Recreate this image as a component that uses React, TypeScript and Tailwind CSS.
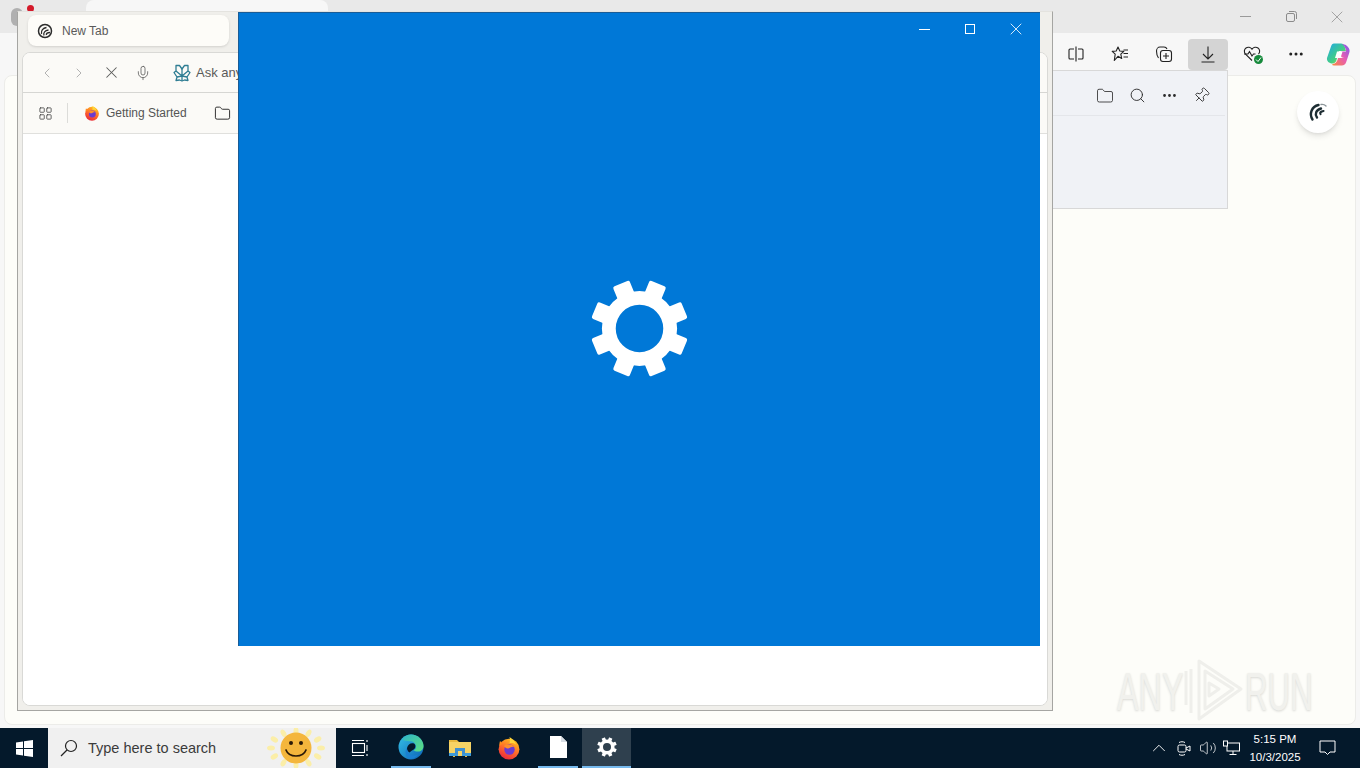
import React from "react";
import { ChevronLeft, ChevronRight, X, Mic, LayoutGrid, Folder, Search, MoreHorizontal, Pin, ChevronUp, Volume2 } from "lucide-react";

const Gear = ({ size, color, hole }: { size: number; color: string; hole: number }) => {
  const angles = [22.5, 67.5, 112.5, 157.5, 202.5, 247.5, 292.5, 337.5];
  return (
    <svg width={size} height={size} viewBox="0 0 100 100">
      {angles.map((a) => (
        <rect key={a} x="41" y="1" width="18" height="24" rx="2" fill={color} transform={`rotate(${a} 50 50)`} />
      ))}
      <circle cx="50" cy="50" r={(38 + hole) / 2} fill="none" stroke={color} strokeWidth={38 - hole} />
    </svg>
  );
};

const Swirl = ({ size = 18 }: { size?: number }) => (
  <svg width={size} height={size} viewBox="0 0 20 20" fill="none" stroke="#1d2d33" strokeLinecap="round">
    <path d="M4.500 17.500C1 12 3.500 4.500 10.500 3" strokeWidth="2.400" />
    <path d="M9 15.500C6.500 12 8 8 13 6.500" strokeWidth="2.400" />
    <path d="M12.500 12C11.500 10.500 13 9.500 15.500 9" strokeWidth="2.200" />
    <path d="M13 2.500c2-.3 3.500 0 5 1.500" strokeWidth="1.400" stroke="#8a9498" />
  </svg>
);

const TabSwirl = () => (
  <svg width="16" height="16" viewBox="0 0 16 16" fill="none" stroke="#2c2c2c">
    <circle cx="8" cy="8" r="6.500" strokeWidth="1.500" />
    <path d="M4.500 11C3.800 7.500 6 5 9.500 4.500" strokeWidth="1.300" />
    <path d="M7 12.500C6 9.500 8 7.500 11.500 7" strokeWidth="1.300" />
    <path d="M9.500 12C9 10.500 10.500 9.500 13 9.500" strokeWidth="1.500" />
  </svg>
);

const Firefox = ({ size }: { size: number }) => (
  <svg width={size} height={size} viewBox="0 0 24 24">
    <defs>
      <linearGradient id="ffa" x1="0.7" y1="0" x2="0.2" y2="1">
        <stop offset="0" stopColor="#ffc21c" />
        <stop offset="0.5" stopColor="#ff6a2b" />
        <stop offset="1" stopColor="#e5203f" />
      </linearGradient>
    </defs>
    <circle cx="12" cy="13.200" r="10.400" fill="url(#ffa)" />
    <path d="M12.500 1c3 2 5.500 4 6.500 7.500-3-1.800-5-1.500-6.500-1 .5-2 .6-4 0-6.500z" fill="#ffd53a" />
    <path d="M3 5c-.6 2-.8 3.500-.5 5l3-2.500z" fill="#ff8b1c" />
    <circle cx="12.500" cy="13.500" r="5.200" fill="#6b3bd0" />
    <path d="M7 10c3-2 8-2 10.500 1-2.500-.6-4 .4-5.500 1.200-2 .8-3.500 0-5-2.200z" fill="#ff8f2c" />
  </svg>
);

const Edge = () => (
  <svg width="26" height="26" viewBox="0 0 26 26">
    <defs>
      <linearGradient id="ega" x1="0" y1="0" x2="1" y2="1">
        <stop offset="0" stopColor="#35c1e8" />
        <stop offset="1" stopColor="#0b62b5" />
      </linearGradient>
      <linearGradient id="egb" x1="0" y1="0" x2="1" y2="1">
        <stop offset="0" stopColor="#2fb5c9" />
        <stop offset="1" stopColor="#5ee07f" />
      </linearGradient>
    </defs>
    <circle cx="13" cy="13" r="12.500" fill="url(#ega)" />
    <path d="M4 5.500C6.500 2 10 .5 13 .5c7 0 12.500 5.500 12.500 11.500 0 3.500-2.500 5.500-5.500 5.500-2 0-3.500-.6-4.500-1.300 2-.7 2.500-2.200 2.500-3.500 0-3.500-3-5.500-6-5.500C8 7.200 6 6.500 4 5.500z" fill="url(#egb)" />
    <path d="M9 14c1-4 4-5.500 7-4.500 1.600 1 2 3.500.5 5.200-1.500 1.600-3.500 2-5 3.800C10 17.500 9 16 9 14z" fill="#04192b" />
    <path d="M9 14c-.5 4 3 7.500 7.500 7.500 1.200 0 2.500-.3 3.500-1-1.800 2.800-5 4.500-8 4.200C8 24 6 18 9 14z" fill="#1a7fd0" />
  </svg>
);

const Explorer = () => (
  <svg width="22" height="20" viewBox="0 0 22 20">
    <path d="M0 2h8l2 2h12v3H0z" fill="#e8b93e" />
    <rect x="0" y="4" width="22" height="13" fill="#f6d365" />
    <rect x="0" y="15" width="22" height="3" fill="#3f9bd9" />
    <rect x="6" y="10" width="10" height="6" fill="#3f8fd0" />
    <rect x="9" y="13" width="4" height="5" fill="#f6d365" />
    <rect x="4" y="18" width="2" height="1" fill="#e8b93e" />
    <rect x="16" y="18" width="2" height="1" fill="#e8b93e" />
  </svg>
);

const Copilot = () => (
  <svg width="24" height="24" viewBox="0 0 24 24">
    <defs>
      <linearGradient id="cpa" x1="0" y1="0" x2="1" y2="1">
        <stop offset="0" stopColor="#1fa8e8" />
        <stop offset="0.600" stopColor="#45cf80" />
        <stop offset="1" stopColor="#f7d23a" />
      </linearGradient>
      <linearGradient id="cpb" x1="1" y1="0" x2="0" y2="1">
        <stop offset="0" stopColor="#7a5af0" />
        <stop offset="0.500" stopColor="#e85cb0" />
        <stop offset="1" stopColor="#f98a3c" />
      </linearGradient>
    </defs>
    <path d="M8 1.500h7c2 0 3 1 3.500 2.500L20 9h-7l-2.500 9c-.5 2-2 3.500-4 3.500C3 21.500.5 19 1 16L5 4.500c.6-2 1.500-3 3-3z" fill="url(#cpa)" />
    <path d="M16 2.500c3.500-1 7 3 7.500 5.500.2 1 0 2-.3 3l-3 9c-.7 2-2 3.500-4.500 3.500H8c-2 0-2.500-.8-1-1.500 2.500-.5 3.500-1.500 4.500-4l.5-2h7c-2.500 0-5-1.500-4.500-4l.8-2.500H20c0-3-1.500-5.500-4-7.500z" fill="url(#cpb)" />
    <path d="M11 9.500h5.500l-2 6.500H9z" fill="#fff" />
  </svg>
);

const Sun = () => {
  const rays = [0, 30, 60, 90, 120, 150, 180, 210, 240, 270, 300, 330];
  return (
    <svg width="60" height="40" viewBox="0 0 60 40">
      {rays.map((a) => {
        const r = (a * Math.PI) / 180;
        return <ellipse key={a} cx={30 + 25 * Math.cos(r)} cy={20 + 17 * Math.sin(r)} rx="4" ry="2.500" fill="#fbeea8" transform={`rotate(${a} ${30 + 25 * Math.cos(r)} ${20 + 17 * Math.sin(r)})`} />;
      })}
      <circle cx="30" cy="20" r="15.500" fill="#f4b63c" />
      <circle cx="25" cy="15" r="2" fill="#2b1a08" />
      <circle cx="35" cy="15" r="2" fill="#2b1a08" />
      <path d="M20 22c3 8 17 8 20 0" fill="none" stroke="#2b1a08" strokeWidth="1.700" strokeLinecap="round" />
    </svg>
  );
};

const AnyRunLogo = () => (
  <div className="flex items-center text-[#f1f1ed] text-[54px] leading-none">
    <span className="inline-block w-[66px] scale-x-[0.6] origin-left whitespace-nowrap [text-shadow:0_1px_3px_#d8d8d4]">ANY</span>
    <svg width="62" height="64" viewBox="0 0 62 64" fill="none" stroke="#efefeb" strokeWidth="3" strokeLinejoin="round">
      <path d="M3 12v34M8 10v44" />
      <path d="M16 2l42 28-42 30V2z" />
      <path d="M22 12l28 18-28 20V12z" />
      <path d="M26 24l10 6-10 7z" />
    </svg>
    <span className="inline-block w-[60px] scale-x-[0.58] origin-left whitespace-nowrap [text-shadow:0_1px_3px_#d8d8d4]">RUN</span>
  </div>
);

export default function App() {
  return (
    <div className="relative flex flex-col w-[1360px] h-[768px] overflow-hidden font-['Liberation_Sans',sans-serif] bg-[#fdfdf9]">
      {/* Edge window behind */}
      <div className="h-[728px] flex flex-col">
        <div className="h-[33px] bg-[#e9e9e9] flex justify-end items-center shrink-0 relative">
          <div className="absolute left-[86px] top-0 w-[242px] h-[33px] bg-[#f7f7f7] rounded-t-lg" />
          <div className="absolute left-[27px] top-[5px] w-[7px] h-[7px] rounded-full bg-[#d41a2a]" />
          <div className="absolute left-[11px] top-[8px] w-[12px] h-[18px] rounded-full bg-[#b0b0b0]" />
          <div className="flex items-center text-[#8b8b8b]">
            <div className="w-[46px] flex justify-center"><div className="w-[11px] h-px bg-[#9a9a9a]" /></div>
            <div className="w-[46px] flex justify-center">
              <svg width="11" height="11" viewBox="0 0 11 11" fill="none" stroke="#8b8b8b"><rect x="0.500" y="2.500" width="8" height="8" rx="1.500" /><path d="M3 .5h5.500a2 2 0 0 1 2 2V8" /></svg>
            </div>
            <div className="w-[46px] flex justify-center"><X size={20} strokeWidth={0.9} color="#8b8b8b" /></div>
          </div>
        </div>
        <div className="h-[41px] bg-[#f7f7f7] flex justify-end items-center pr-[2px] pt-[1px] shrink-0">
          <div className="flex items-center text-[#2b2b2b]">
            <div className="w-[44px] h-[32px] flex items-center justify-center">
              <svg width="16" height="16" viewBox="0 0 16 16" fill="none" stroke="#222" strokeWidth="1.100"><path d="M6 3H2a1 1 0 0 0-1 1v8a1 1 0 0 0 1 1h4M10 3h4a1 1 0 0 1 1 1v8a1 1 0 0 1-1 1h-4M8 .5v15" /></svg>
            </div>
            <div className="w-[44px] h-[32px] flex items-center justify-center">
              <svg width="18" height="18" viewBox="0 0 18 18" fill="none" stroke="#222" strokeWidth="1.100" strokeLinejoin="round"><path d="M7 2l1.800 4 4 .4-3 2.700.9 4.400L7 11.300 3.300 15.500 4.200 9.100l-3-2.700 4-.4z" /><path d="M12.500 5h4.500M12.500 8.500h4.500M12.500 12h4.500" /></svg>
            </div>
            <div className="w-[44px] h-[32px] flex items-center justify-center">
              <svg width="18" height="18" viewBox="0 0 18 18" fill="none" stroke="#222" strokeWidth="1.100"><rect x="5.500" y="5.500" width="11" height="11" rx="2.500" /><path d="M11 8v6M8 11h6" /><path d="M3.500 13C2 11 1.500 8 1.500 6c0-2 1.500-4 3.500-4h4c1.500 0 2.500.8 3 2" /></svg>
            </div>
            <div className="w-[40px] h-[31px] mx-[2px] rounded-sm bg-[#d4d4d4] flex items-center justify-center">
              <svg width="14" height="17" viewBox="0 0 14 17" fill="none" stroke="#222" strokeWidth="1.100"><path d="M7 .5v12M2 8l5 5 5-5M.5 16h13" /></svg>
            </div>
            <div className="w-[44px] h-[32px] flex items-center justify-center relative">
              <svg width="18" height="16" viewBox="0 0 18 16" fill="none" stroke="#222" strokeWidth="1.100"><path d="M9 14.500L2.500 8.200C.8 6.200 1 3.500 3 2c1.800-1.300 4.500-1 6 1.200C10.500 1 13.200.7 15 2c2 1.500 2.200 4.200.5 6.200" /><path d="M1 8h4l1.500-2.500L9 10l1.500-2h2" /></svg>
              <span className="absolute left-[24px] top-[17px] w-[9px] h-[9px] rounded-full bg-[#168a3c] flex items-center justify-center">
                <svg width="7" height="7" viewBox="0 0 7 7" fill="none" stroke="#fff" strokeWidth="1"><path d="M1 3.500l2 2 3-4" /></svg>
              </span>
            </div>
            <div className="w-[44px] h-[32px] flex items-center justify-center"><MoreHorizontal size={18} strokeWidth={2} color="#222" /></div>
            <div className="w-[40px] h-[32px] flex items-center justify-center"><Copilot /></div>
          </div>
        </div>
        <div className="flex-1 flex bg-[#f7f7f7]">
          <div className="flex-1 mt-[1px] mb-[3px] ml-[4px] mr-[4px] rounded-lg bg-[#fdfdf9] border border-[#ecece9] relative">
            <div className="absolute left-[1292px] top-[15px] w-[42px] h-[42px] rounded-full bg-white shadow-md flex items-center justify-center"><Swirl size={20} /></div>
            <div className="absolute left-[1112px] bottom-[1px]"><AnyRunLogo /></div>
          </div>
        </div>
      </div>

      {/* Downloads panel */}
      <div className="absolute left-[1050px] top-[70px] w-[178px] h-[139px] bg-[#f0f2f6] border border-[#d8d8d8] flex flex-col">
        <div className="h-[45px] mx-[2px] pt-[5px] border-b border-[#e4e6ea] flex items-center justify-end pr-[8px] text-[#2b2b2b]">
          <div className="w-[32px] flex justify-center"><Folder size={18} strokeWidth={1.100} /></div>
          <div className="w-[32px] flex justify-center"><Search size={17} strokeWidth={1.300} /></div>
          <div className="w-[32px] flex justify-center"><MoreHorizontal size={17} strokeWidth={2} /></div>
          <div className="w-[32px] flex justify-center"><Pin size={17} strokeWidth={1.200} className="rotate-45" /></div>
        </div>
      </div>

      {/* Firefox window */}
      <div className="absolute left-[17px] top-[11px] w-[1036px] h-[700px] bg-[#f0efeb] border border-[#a5a5a2] border-t-[#e4e3df] flex flex-col px-[4px] pb-[4px]">
        <div className="h-[40px] shrink-0 flex items-start pt-[3px] px-[6px]">
          <div className="w-[201px] h-[31px] rounded-lg bg-[#fdfcf8] shadow-sm flex items-center pl-[9px] gap-[8px]">
            <TabSwirl />
            <span className="text-[12px] text-[#5a5a5a] ml-[1px]">New Tab</span>
          </div>
        </div>
        <div className="flex-1 rounded-lg bg-white border border-[#d9d9d6] flex flex-col overflow-hidden">
          <div className="h-[40px] shrink-0 bg-[#fbfaf7] border-b border-[#d6d6d3] flex items-center text-[#5b5b5b]">
            <div className="w-[48px] flex justify-center"><ChevronLeft size={16} strokeWidth={1.400} color="#acacac" /></div>
            <div className="w-[16px] flex justify-center"><ChevronRight size={16} strokeWidth={1.400} color="#acacac" /></div>
            <div className="w-[48px] flex justify-center"><X size={19} strokeWidth={1.300} /></div>
            <div className="w-[16px] flex justify-center"><Mic size={16} strokeWidth={1.200} /></div>
            <div className="ml-[22px] flex items-center gap-[5px]">
              <svg width="18" height="18" viewBox="0 0 18 18" fill="none" stroke="#2f7d93" strokeWidth="1.300" strokeLinejoin="round"><path d="M3 1.500h3.500L9 5l2.500-3.500H15V7l2 1.500L14 13l1 3.500-3.500-.5L9 17l-2.500-1-3.500.5L4 13 1 8.500 3 7z" /><path d="M9 5v12M3 7l6 5 6-5M4 13l5-1 5 1" /></svg>
              <span className="text-[13px] text-[#5a5a5a] whitespace-nowrap">Ask anything</span>
            </div>
          </div>
          <div className="h-[41px] shrink-0 bg-[#fbfaf7] border-b border-[#e0e0dd] flex items-center text-[#444]">
            <div className="w-[44px] flex justify-center"><LayoutGrid size={15} strokeWidth={1.300} /></div>
            <div className="w-px h-[20px] bg-[#dcdcd9]" />
            <div className="ml-[16px] flex items-center gap-[6px]">
              <Firefox size={16} />
              <span className="text-[12px] text-[#555]">Getting Started</span>
            </div>
            <div className="ml-[27px]"><Folder size={17} strokeWidth={1.300} color="#222" /></div>
          </div>
          <div className="flex-1 bg-white" />
        </div>
      </div>

      {/* Settings splash window */}
      <div className="absolute left-[238px] top-[12px] w-[802px] h-[634px] bg-[#0078d7] border-t border-l border-[#1a5c96] flex flex-col">
        <div className="h-[32px] shrink-0 flex justify-end pr-[1px]">
          <div className="w-[46px] flex items-center justify-center"><div className="w-[11px] h-px bg-white" /></div>
          <div className="w-[46px] flex items-center justify-center"><div className="w-[10px] h-[10px] border border-white" /></div>
          <div className="w-[46px] flex items-center justify-center"><X size={20} strokeWidth={1} color="#fff" /></div>
        </div>
        <div className="flex-1 flex items-center justify-center pb-[35px] pr-[1px]">
          <Gear size={99} color="#fff" hole={24} />
        </div>
      </div>

      {/* Taskbar */}
      <div className="h-[40px] shrink-0 bg-[#04192b] flex items-center text-white z-10">
        <div className="w-[48px] h-full flex items-center justify-center">
          <svg width="17" height="17" viewBox="0 0 17 17" fill="#fff"><path d="M0 2.400L7 1.400V8H0zM8 1.200L17 0v8H8zM0 9h7v6.600L0 14.600zM8 9h9v8L8 15.800z" /></svg>
        </div>
        <div className="w-[288px] h-full bg-[#f0f0f0] flex items-center pl-[12px] relative">
          <svg width="18" height="18" viewBox="0 0 18 18" fill="none" stroke="#222" strokeWidth="1.200"><circle cx="11" cy="7" r="5.500" /><path d="M7 11l-6 6" /></svg>
          <span className="ml-[10px] mt-[2px] text-[14.500px] text-[#3b3b3b]">Type here to search</span>
          <div className="absolute left-[218px] top-0"><Sun /></div>
        </div>
        <div className="w-[48px] h-full flex items-center justify-center">
          <svg width="18" height="18" viewBox="0 0 18 18" fill="none" stroke="#fff" strokeWidth="1.100"><rect x="1.500" y="4.500" width="12" height="9" /><path d="M1 1.500h12M1 16.500h12M16 1v2M16 6v6M16 15v2" /></svg>
        </div>
        <div className="w-[40px] ml-[7px] h-full flex items-center justify-center border-b-2 border-[#76b9ed]"><Edge /></div>
        <div className="w-[49px] ml-[4px] flex items-center justify-center"><Explorer /></div>
        <div className="w-[49px] flex items-center justify-center"><Firefox size={24} /></div>
        <div className="w-[40px] ml-[5px] h-full flex items-center justify-center border-b-2 border-[#76b9ed]">
          <svg width="17" height="22" viewBox="0 0 17 22"><path d="M0 0h11l6 6v16H0z" fill="#fff" /><path d="M11 0l6 6h-6z" fill="#d7dde4" /></svg>
        </div>
        <div className="w-[49px] ml-[4px] h-full bg-[#2f404e] flex items-center justify-center border-b-2 border-[#76b9ed]">
          <Gear size={20} color="#fff" hole={20} />
        </div>
        <div className="flex-1" />
        <div className="flex items-center h-full">
          <ChevronUp size={22} strokeWidth={1} />
          <svg className="ml-[6px]" width="16" height="16" viewBox="0 0 16 16" fill="none" stroke="#fff" strokeWidth="1"><rect x="2" y="5" width="8" height="7" rx="1.500" /><path d="M10 8l4-2v5l-4-2M3 2.500c2-1 4-1 6 0M3 14.500c2 1 4 1 6 0" /></svg>
          <Volume2 className="ml-[7px]" size={18} strokeWidth={1} />
          <svg className="ml-[6px]" width="17" height="16" viewBox="0 0 17 16" fill="none" stroke="#fff" strokeWidth="1"><rect x="4" y="3" width="12.500" height="8" /><path d="M10 11v3M6.500 14.500h7" /><rect x="0.500" y="1" width="4" height="5" fill="#04192b" /></svg>
          <div className="w-[60px] ml-[5px] text-center text-[11.500px] leading-[18px] whitespace-nowrap flex flex-col items-center">
            <span>5:15 PM</span>
            <span>10/3/2025</span>
          </div>
          <div className="w-[40px] ml-[2px] mr-[13px] flex justify-center">
            <svg width="17" height="16" viewBox="0 0 17 16" fill="none" stroke="#fff" strokeWidth="1"><path d="M1 1h15v11h-5l-2.500 2.500L6 12H1z" /></svg>
          </div>
        </div>
      </div>
    </div>
  );
}
